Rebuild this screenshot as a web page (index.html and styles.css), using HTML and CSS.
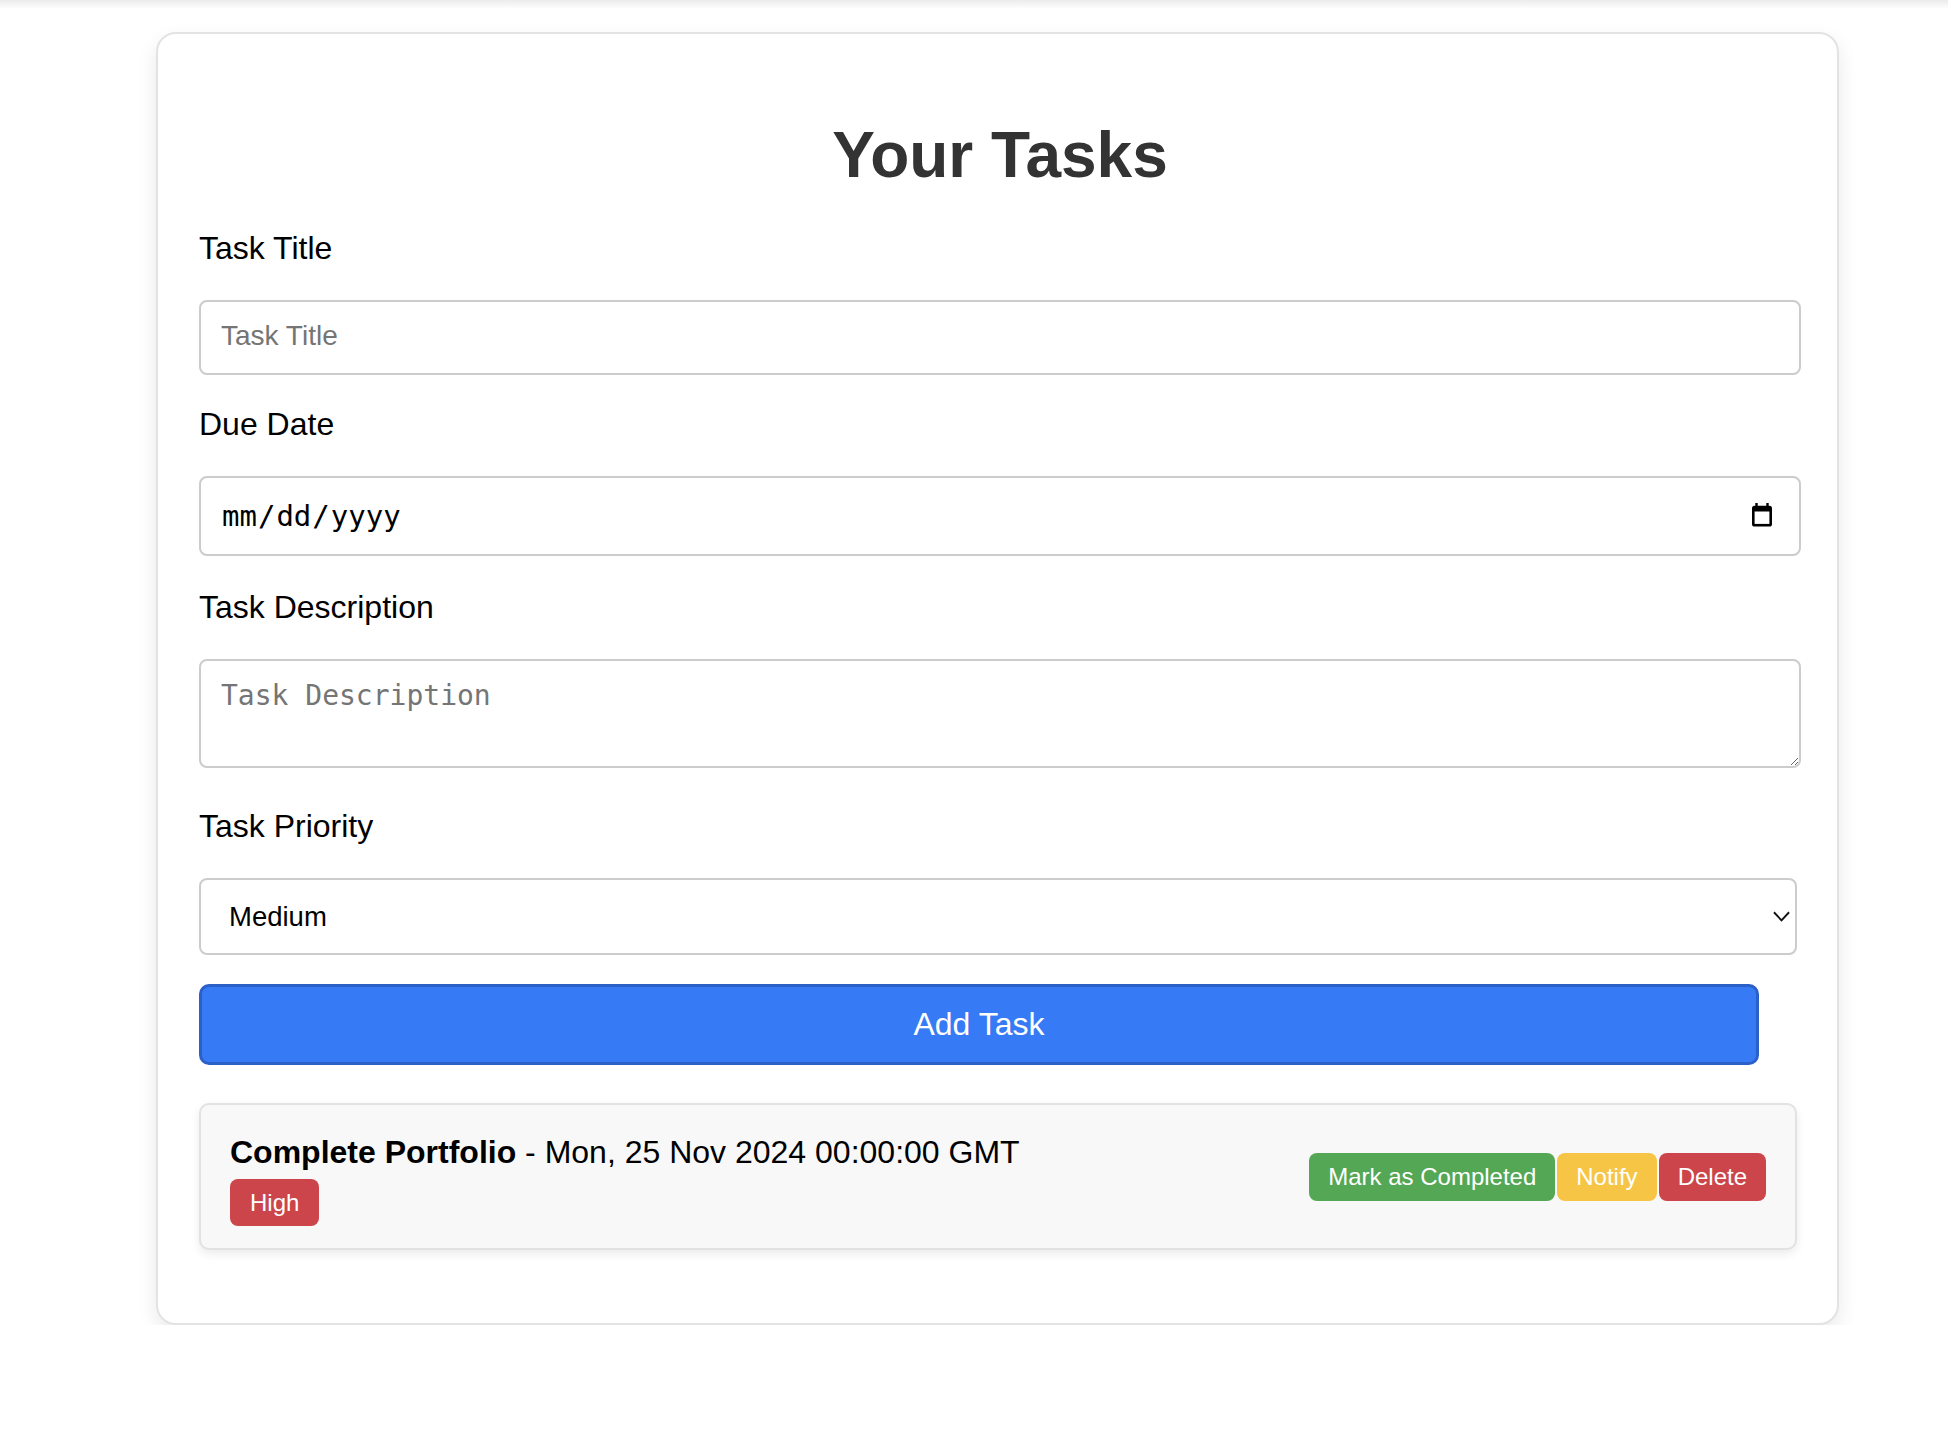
FILE: index.html
```html
<!DOCTYPE html>
<html lang="en">
<head>
<meta charset="utf-8">
<title>Your Tasks</title>
<link rel="stylesheet" href="styles.css">
</head>
<body>
<div class="card">
  <h1 class="title">Your Tasks</h1>
  <form class="task-form">
    <label class="field-label" for="task-title">Task Title</label>
    <input class="field field-text" id="task-title" type="text" placeholder="Task Title">

    <label class="field-label" for="task-date">Due Date</label>
    <div class="date-wrap">
      <input class="field field-date" id="task-date" type="date">
      <svg class="cal-icon" viewBox="0 0 20 24" aria-hidden="true">
        <rect x="3.3" y="0" width="2.4" height="5" fill="#000"/>
        <rect x="14.3" y="0" width="2.4" height="5" fill="#000"/>
        <rect x="0" y="2.7" width="20" height="20.8" rx="2.6" fill="#000"/>
        <rect x="2.6" y="8.5" width="14.8" height="12.4" fill="#fff"/>
      </svg>
    </div>

    <label class="field-label" for="task-desc">Task Description</label>
    <textarea class="field field-area" id="task-desc" placeholder="Task Description"></textarea>

    <label class="field-label" for="task-priority">Task Priority</label>
    <div class="select-wrap">
      <select class="field field-select" id="task-priority">
        <option>Low</option>
        <option selected>Medium</option>
        <option>High</option>
      </select>
      <svg class="chevron" viewBox="0 0 18 11" aria-hidden="true">
        <polyline points="1,1 9,9.5 17,1" fill="none" stroke="#111" stroke-width="2"/>
      </svg>
    </div>

    <button class="add-btn" type="button">Add Task</button>
  </form>

  <ul class="task-list">
    <li class="task-item">
      <div class="task-info">
        <div class="task-head"><strong>Complete Portfolio</strong> - Mon, 25 Nov 2024 00:00:00 GMT</div>
        <span class="badge badge-high">High</span>
      </div>
      <div class="task-actions">
        <button class="act-btn act-done" type="button">Mark as Completed</button>
        <button class="act-btn act-notify" type="button">Notify</button>
        <button class="act-btn act-delete" type="button">Delete</button>
      </div>
    </li>
  </ul>
</div>
</body>
</html>
```

FILE: styles.css
```css
html, body {
  margin: 0;
  padding: 0;
}

body {
  background: #fff linear-gradient(#ebebeb, #ffffff 9px) no-repeat;
  font-family: "Liberation Sans", Arial, Helvetica, sans-serif;
  color: #000;
}

.card {
  box-sizing: border-box;
  width: 1683px;
  margin: 32px 0 0 156px;
  padding: 40px 36px 73px 41px;
  background: #fff;
  border: 2px solid #e3e3e3;
  border-radius: 20px;
  box-shadow: 0 8px 20px rgba(0, 0, 0, 0.09);
}

.title {
  margin: 45px 0 39px;
  font-size: 64px;
  line-height: 72px;
  font-weight: 700;
  color: #333;
  text-align: center;
}

.task-form {
  display: flex;
  flex-direction: column;
  align-items: flex-start;
  margin: 0;
}

.field-label {
  font-size: 32px;
  line-height: 36px;
  color: #000;
  margin-bottom: 34px;
}

.field {
  box-sizing: border-box;
  width: 100%;
  margin: 0;
  border: 2px solid #ccc;
  border-radius: 8px;
  background: #fff;
  color: #000;
  font-family: "Liberation Sans", Arial, sans-serif;
  font-size: 28px;
  outline: none;
}

.field::placeholder {
  color: #757575;
}

.field-text {
  height: 75px;
  padding: 0 20px 3px;
  margin-bottom: 31px;
}

.date-wrap {
  position: relative;
  width: 100%;
  margin-bottom: 33px;
}

.field-date {
  display: block;
  height: 80px;
  padding: 0 20px;
  font-family: "DejaVu Sans Mono", "Liberation Mono", monospace;
  font-size: 29px;
}

.field-date::-webkit-calendar-picker-indicator {
  display: none;
}

.field-date::-webkit-datetime-edit {
  padding: 0;
}

.cal-icon {
  position: absolute;
  right: 29px;
  top: 27px;
  width: 20px;
  height: 24px;
  pointer-events: none;
}

.field-area {
  display: block;
  height: 109px;
  padding: 18px 20px;
  font-family: "DejaVu Sans Mono", "Liberation Mono", monospace;
  font-size: 28px;
  margin-bottom: 40px;
}

.select-wrap {
  position: relative;
  width: calc(100% - 4px);
  margin-bottom: 29px;
}

.field-select {
  display: block;
  height: 77px;
  padding: 0 28px;
  font-size: 27.5px;
  -webkit-appearance: none;
  appearance: none;
}

.chevron {
  position: absolute;
  right: 7px;
  top: 33px;
  width: 17px;
  height: 11px;
  pointer-events: none;
}

.add-btn {
  box-sizing: border-box;
  width: calc(100% - 42px);
  height: 81px;
  margin: 0 0 38px;
  padding: 0;
  border: 3px solid #2c60c9;
  border-radius: 10px;
  background: #377af5;
  color: #fff;
  font-family: "Liberation Sans", Arial, sans-serif;
  font-size: 32px;
}

.task-list {
  list-style: none;
  margin: 0;
  padding: 0;
}

.task-item {
  box-sizing: border-box;
  width: calc(100% - 4px);
  height: 147px;
  display: flex;
  align-items: center;
  justify-content: space-between;
  padding: 23px 29px 22px;
  background: #f8f8f8;
  border: 2px solid #e2e2e2;
  border-radius: 10px;
  box-shadow: 0 4px 10px rgba(0, 0, 0, 0.08);
}

.task-info {
  display: flex;
  flex-direction: column;
  align-items: flex-start;
}

.task-head {
  font-size: 32px;
  line-height: 49px;
  color: #000;
}

.task-head strong {
  font-weight: 700;
}

.badge {
  margin-top: 2px;
  height: 47px;
  line-height: 47px;
  padding: 0 20px;
  border-radius: 8px;
  color: #fff;
  font-size: 24px;
}

.badge-high {
  background: #cb454b;
}

.task-actions {
  display: flex;
  gap: 2px;
}

.act-btn {
  height: 48px;
  margin: 0;
  padding: 0 19px;
  border: 0;
  border-radius: 8px;
  color: #fff;
  font-family: "Liberation Sans", Arial, sans-serif;
  font-size: 24px;
}

.act-done {
  background: #54a754;
}

.act-notify {
  background: #f6c546;
}

.act-delete {
  background: #cb454b;
}
```
